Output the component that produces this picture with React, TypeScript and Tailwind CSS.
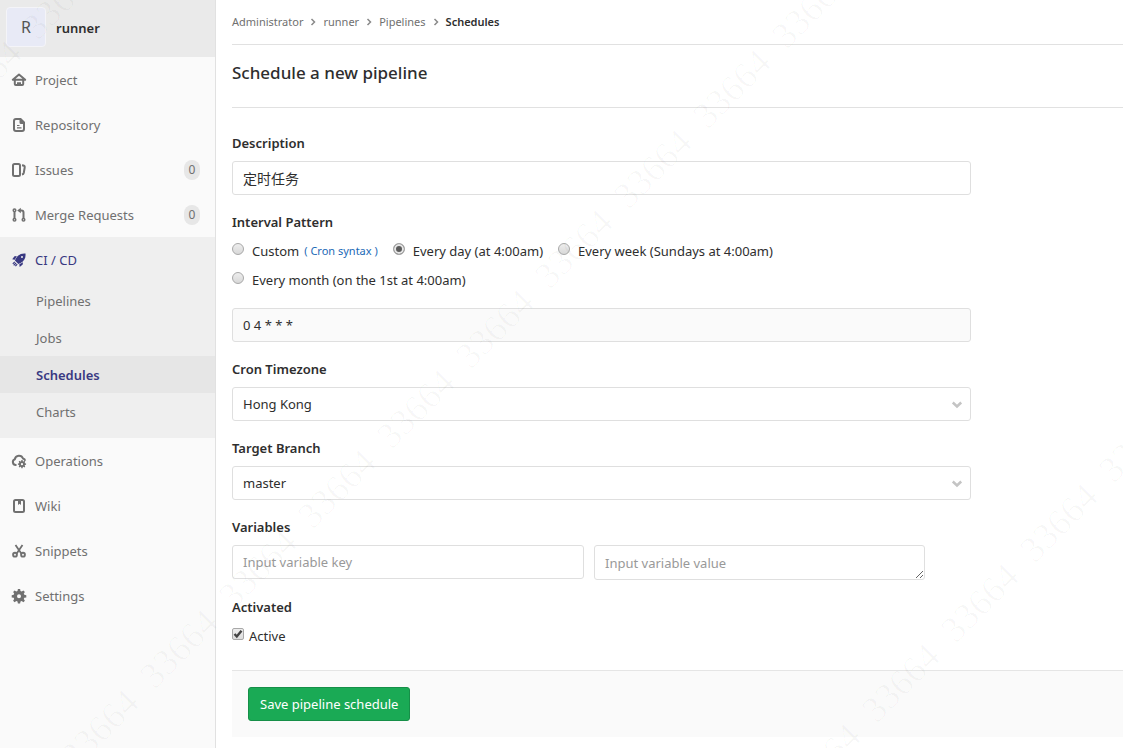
import React, { useState } from "react";

type IconProps = { children: React.ReactNode };

function Icon({ children }: IconProps) {
  return (
    <svg className="h-4 w-4 shrink-0" viewBox="0 0 16 16" fill="none" stroke="currentColor" strokeWidth="2" aria-hidden="true">
      {children}
    </svg>
  );
}

const gearPath =
  "M6.900 1h2.200l.4 2 1.200.5 1.700-1.100 1.500 1.500-1.100 1.700.5 1.200 2 .4v2.200l-2 .4-.5 1.200 1.100 1.700-1.500 1.500-1.700-1.100-1.200.5-.4 1.900H6.900l-.4-1.900-1.200-.5-1.700 1.100-1.500-1.500 1.100-1.700-.5-1.200-2-.4V7.200l2-.4.5-1.200-1.100-1.700 1.500-1.500 1.700 1.100 1.200-.5zM8 6.300a2 2 0 1 0 0 4 2 2 0 0 0 0-4z";

const icons = {
  project: (
    <Icon>
      <path d="M1.800 7.800 8 2.600l6.200 5.200z" strokeLinejoin="round" strokeWidth="2" />
      <path d="M3.800 8v4a1 1 0 0 0 1 1h6.400a1 1 0 0 0 1-1V8M6 11.200h4" />
    </Icon>
  ),
  repository: (
    <Icon>
      <path d="M3 4a2 2 0 0 1 2-2h4.500L13 5.500V12a2 2 0 0 1-2 2H5a2 2 0 0 1-2-2z" />
      <path d="M8.500 1.500h1.500l3.500 3.500v2H10a1.500 1.500 0 0 1-1.500-1.500z" fill="currentColor" stroke="none" />
      <path d="M6 8.500h2.500M6 10.800h4.500" strokeWidth="1.200" />
    </Icon>
  ),
  issues: (
    <Icon>
      <rect x="2" y="2" width="7" height="12" rx="1.500" />
      <path d="M11 3.200c2 .3 3 .8 2.700 2.300l-.9 5.200c-.2 1-.7 1.500-1.800 1.800" />
    </Icon>
  ),
  merge: (
    <Icon>
      <g strokeWidth="1.500">
        <circle cx="3.500" cy="3.200" r="1.300" />
        <circle cx="3.500" cy="12.800" r="1.300" />
        <circle cx="12.500" cy="12.800" r="1.300" />
      </g>
      <path d="M3.500 4.500v7M12.500 11.500V5.500a2 2 0 0 0-2-2H9" strokeWidth="2" />
      <path d="M6.200 3.500 9.800.8v5.400z" fill="currentColor" stroke="none" />
    </Icon>
  ),
  rocket: (
    <Icon>
      <path
        d="M14.500 1.500c-4.500-.3-7 1.200-9.600 4.900l-1 2.200 3.500 3.500 2.200-1c3.900-2.600 5.300-5.100 4.900-9.600zM11 4a1 1 0 1 1 0 2 1 1 0 0 1 0-2z"
        fill="currentColor"
        fillRule="evenodd"
        stroke="none"
      />
      <path d="M5.800 4 3.500 4.300 1.200 7.300l2.600.4zM12 10.200l-.3 2.300-3 2.500-.4-2.800z" fill="currentColor" stroke="none" />
      <path d="m3.800 9.800-2 2M5 11l-2.300 2.300M6.200 12.200l-1.800 2" strokeWidth="1.200" />
    </Icon>
  ),
  operations: (
    <Icon>
      <path d="M5.500 12H4.800a3 3 0 0 1-1-5.800A4.300 4.300 0 0 1 12 5.500a2.800 2.800 0 0 1 2.200 2.200" strokeWidth="2" />
      <g transform="translate(6.500 6.500) scale(.56)">
        <path d={gearPath} fill="currentColor" fillRule="evenodd" stroke="none" />
      </g>
    </Icon>
  ),
  wiki: (
    <Icon>
      <rect x="3" y="2" width="10" height="12" rx="1.500" />
      <path d="M7 2h3v5L8.500 5.800 7 7z" fill="currentColor" stroke="none" />
    </Icon>
  ),
  snippets: (
    <Icon>
      <path d="m4.500 2 5.800 8.500M11.500 2 5.700 10.500" strokeWidth="1.800" />
      <circle cx="4" cy="11.700" r="1.900" strokeWidth="1.900" />
      <circle cx="12" cy="11.700" r="1.900" strokeWidth="1.900" />
    </Icon>
  ),
  settings: (
    <Icon>
      <path d={gearPath} fill="currentColor" fillRule="evenodd" stroke="none" />
    </Icon>
  ),
};

type NavItemProps = { icon: React.ReactNode; label: string; count?: number; active?: boolean };

function NavItem({ icon, label, count, active = false }: NavItemProps) {
  return (
    <a href="#" className={`flex h-[45px] items-center gap-2 pr-[15px] pl-[11px] ${active ? "text-[#393982]" : "text-[#707070]"}`}>
      {icon}
      <span className="grow">{label}</span>
      {count !== undefined && (
        <span className="flex h-5 w-4 items-center justify-center rounded-full bg-[#e7e7e7] text-xs">{count}</span>
      )}
    </a>
  );
}

const subItems = ["Pipelines", "Jobs", "Schedules", "Charts"];

function Sidebar() {
  return (
    <aside className="w-54 shrink-0 border-r border-[#e1e1e1] bg-[#fafafa]">
      <a href="#" className="flex h-[57px] items-center gap-[10px] bg-[#eaeaea] pb-[3px] pl-[6px]">
        <span className="flex size-10 items-center justify-center rounded-sm border border-[#f4f4f8] bg-[#e8eaf6] text-base text-[#555]">R</span>
        <span className="pt-[2px] font-semibold">runner</span>
      </a>
      <nav>
        <NavItem icon={icons.project} label="Project" />
        <NavItem icon={icons.repository} label="Repository" />
        <NavItem icon={icons.issues} label="Issues" count={0} />
        <NavItem icon={icons.merge} label="Merge Requests" count={0} />
        <div className="bg-[#efefef] pb-2">
          <NavItem icon={icons.rocket} label="CI / CD" active />
          {subItems.map((item) => (
            <a
              key={item}
              href="#"
              className={`flex h-[37px] items-center pl-9 ${item === "Schedules" ? "bg-[#e6e6e6] font-semibold text-[#393982]" : "text-[#707070]"}`}
            >
              {item}
            </a>
          ))}
        </div>
        <NavItem icon={icons.operations} label="Operations" />
        <NavItem icon={icons.wiki} label="Wiki" />
        <NavItem icon={icons.snippets} label="Snippets" />
        <NavItem icon={icons.settings} label="Settings" />
      </nav>
    </aside>
  );
}

const labelClass = "block h-7 leading-5 font-semibold";
const fieldClass = "block h-[34px] w-full rounded-[3px] border border-[#dfdfdf] px-[10px]";

type RadioProps = { id: string; label: string; checked: boolean; onSelect: () => void; extra?: React.ReactNode };

function Radio({ id, label, checked, onSelect, extra }: RadioProps) {
  return (
    <div className="flex h-[29px] items-center">
      <input
        id={id}
        type="radio"
        name="interval"
        checked={checked}
        onChange={onSelect}
        className="mr-2 mb-1 size-3 appearance-none rounded-full border border-[#a8a8a8] bg-linear-to-b from-[#eee] to-[#d8d8d8] checked:bg-none checked:bg-[#5b5b5b] checked:shadow-[inset_0_0_0_2px_#e6e6e6]"
      />
      <label htmlFor={id}>{label}</label>
      {extra}
    </div>
  );
}

type SelectProps = { id: string; label: string; value: string };

function SelectField({ id, label, value }: SelectProps) {
  return (
    <div>
      <label htmlFor={id} className={labelClass}>{label}</label>
      <div className="relative">
        <select id={id} defaultValue={value} className={`${fieldClass} appearance-none bg-white`}>
          <option>{value}</option>
        </select>
        <svg className="pointer-events-none absolute top-[14px] right-2 h-2 w-3" viewBox="0 0 12 8" fill="none" stroke="#c4c4c4" strokeWidth="2.500" aria-hidden="true">
          <path d="m1.800 1.500 4.200 4 4.200-4" />
        </svg>
      </div>
    </div>
  );
}

const crumbs = ["Administrator", "runner", "Pipelines"];

const diagonals = [
  { x: 62, y: 0, from: -1, to: 0 },
  { x: 732, y: 89, from: -8, to: 1 },
  { x: 980, y: 603, from: -2, to: 2 },
];

function Watermark() {
  return (
    <svg className="pointer-events-none absolute inset-0 h-full w-full" aria-hidden="true">
      <g fill="#000" fillOpacity="0.026" fontFamily="Liberation Serif, serif" fontSize="37" textAnchor="middle">
        {diagonals.flatMap((d) =>
          Array.from({ length: d.to - d.from + 1 }, (_, i) => d.from + i).map((k) => (
            <text key={`${d.x}-${k}`} transform={`translate(${d.x + 79 * k} ${d.y - 80 * k}) rotate(-45)`} y="12">
              33664
            </text>
          )),
        )}
      </g>
    </svg>
  );
}

export default function App() {
  const [interval, setInterval] = useState("day");
  return (
    <div className="relative flex min-h-screen overflow-hidden bg-white font-['Noto_Sans','Noto_Sans_CJK_SC',sans-serif] text-[13px] leading-5 text-[#2e2e2e]">
      <Sidebar />
      <main className="min-w-0 grow pl-4">
        <nav aria-label="Breadcrumb" className="flex h-[45px] items-center border-b border-[#e1e1e1] text-[11px] text-[#707070]">
          {crumbs.map((crumb) => (
            <span key={crumb} className="flex items-center">
              <a href="#">{crumb}</a>
              <svg className="mx-[6px] size-2" viewBox="0 0 8 8" fill="none" stroke="#8a8a8a" strokeWidth="1.500" aria-hidden="true">
                <path d="m2.500 1 3 3-3 3" />
              </svg>
            </span>
          ))}
          <a href="#" className="font-semibold text-[#2e2e2e]">Schedules</a>
        </nav>
        <h1 className="h-[63px] border-b border-[#e1e1e1] pt-4 text-[17px] leading-6 font-medium">Schedule a new pipeline</h1>
        <form onSubmit={(e) => e.preventDefault()}>
          <div className="flex max-w-[739px] flex-col gap-[17px] pt-[25px]">
            <div>
              <label htmlFor="description" className={labelClass}>Description</label>
              <input id="description" defaultValue="定时任务" className={`${fieldClass} text-sm`} />
            </div>
            <fieldset>
              <legend className="leading-5 font-semibold">Interval Pattern</legend>
              <div className="mt-1 mb-[14px] flex flex-wrap gap-x-[15px]">
                <Radio
                  id="custom"
                  label="Custom"
                  checked={interval === "custom"}
                  onSelect={() => setInterval("custom")}
                  extra={
                    <span className="ml-[5px] text-[11px] text-[#1b69b6]">
                      ( <a href="#">Cron syntax</a> )
                    </span>
                  }
                />
                <Radio id="day" label="Every day (at 4:00am)" checked={interval === "day"} onSelect={() => setInterval("day")} />
                <Radio id="week" label="Every week (Sundays at 4:00am)" checked={interval === "week"} onSelect={() => setInterval("week")} />
                <Radio id="month" label="Every month (on the 1st at 4:00am)" checked={interval === "month"} onSelect={() => setInterval("month")} />
              </div>
              <input aria-label="Cron pattern" readOnly value="0 4 * * *" className={`${fieldClass} bg-[#fafafa]`} />
            </fieldset>
            <SelectField id="timezone" label="Cron Timezone" value="Hong Kong" />
            <SelectField id="branch" label="Target Branch" value="master" />
            <fieldset>
              <legend className={labelClass}>Variables</legend>
              <div className="flex items-start gap-[10px]">
                <input aria-label="Variable key" placeholder="Input variable key" className="h-[34px] w-[352px] rounded-[3px] border border-[#dfdfdf] px-[10px] placeholder:text-[#999]" />
                <textarea aria-label="Variable value" rows={1} placeholder="Input variable value" className="h-[35px] w-[331px] rounded-[3px] border border-[#dfdfdf] px-[10px] py-[7px] leading-5 placeholder:text-[#999]" />
              </div>
            </fieldset>
            <fieldset>
              <legend className="leading-5 font-semibold">Activated</legend>
              <div className="mt-1 flex h-[29px] items-center">
                <span className="relative mr-[5px] mb-1 flex size-3">
                  <input id="active" type="checkbox" defaultChecked className="peer size-3 appearance-none rounded-xs border border-[#a8a8a8] bg-linear-to-b from-[#eee] to-[#ddd]" />
                  <svg className="pointer-events-none absolute inset-0 hidden size-3 peer-checked:block" viewBox="0 0 12 12" fill="none" stroke="#444" strokeWidth="2.400" aria-hidden="true">
                    <path d="m2.500 6 2.300 2.500L9.500 2.800" />
                  </svg>
                </span>
                <label htmlFor="active">Active</label>
              </div>
            </fieldset>
          </div>
          <div className="mt-5 border-t border-[#e5e5e5] bg-[#fafafa] p-4">
            <button type="submit" className="h-[34px] rounded-[3px] border border-[#168f48] bg-[#1aaa55] px-[11px] text-white">
              Save pipeline schedule
            </button>
          </div>
        </form>
      </main>
      <Watermark />
    </div>
  );
}
